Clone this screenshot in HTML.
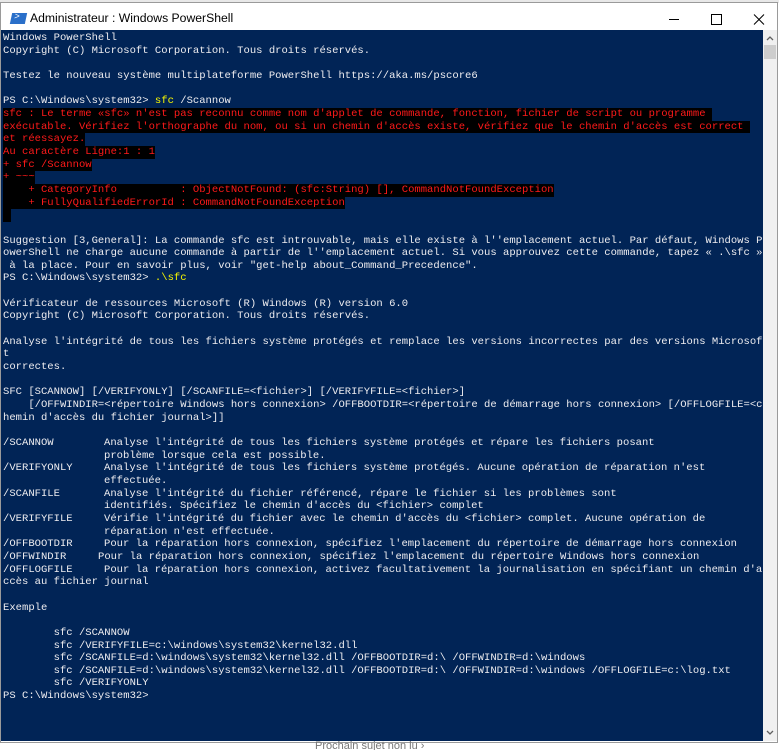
<!DOCTYPE html>
<html><head><meta charset="utf-8">
<style>
*{margin:0;padding:0;box-sizing:border-box}
html,body{width:779px;height:750px;overflow:hidden;background:#fff;position:relative}
#top{position:absolute;left:0;top:0;width:779px;height:3px;background:#e8e8e8}
#win{position:absolute;left:0;top:2px;width:778px;height:741px;border:1px solid #9a9a9a;background:#fff}
#title{position:absolute;left:29px;top:8px;font:12.2px "Liberation Sans",sans-serif;color:#000}
#icon{position:absolute;left:10px;top:10px;width:15px;height:11px;background:#2a6fc9;transform:skewX(-12deg)}
#con{position:absolute;left:1px;top:30px;width:762px;height:711px;background:#012456;overflow:hidden}
#sb{position:absolute;left:763px;top:30px;width:14px;height:711px;background:#f0f0f0}
#thumb{position:absolute;left:1px;top:15px;width:12px;height:14px;background:#cdcdcd}
pre{position:absolute;left:2px;top:2px;font:10.55px/12.65px "Liberation Mono","DejaVu Sans Mono",monospace;color:#eeedf0;white-space:pre}
.y{color:#f6f600}
.e{color:#ff1a1a;background:#000;display:inline-block;height:12.65px;vertical-align:top}
.d{display:inline-block;width:101px}
.d2{display:inline-block;width:95px}
#foot{position:absolute;left:315px;top:740px;font:11px "Liberation Sans",sans-serif;color:#777}
</style></head><body>
<div id="top"></div>
<div id="win">
<div id="icon"><span style="position:absolute;left:3px;top:-2px;color:#fff;font:9px 'Liberation Sans';">&gt;</span></div>
<div id="title">Administrateur : Windows PowerShell</div>
<svg style="position:absolute;left:668px;top:6px" width="100" height="20">
<line x1="0" y1="10.5" x2="10" y2="10.5" stroke="#000" stroke-width="1"/>
<rect x="42.5" y="5.5" width="10" height="10" fill="none" stroke="#000"/>
<path d="M85 5.5 L95 15.5 M95 5.5 L85 15.5" stroke="#000" stroke-width="1"/>
</svg>
</div>
<div id="con"><pre>Windows PowerShell
Copyright (C) Microsoft Corporation. Tous droits réservés.

Testez le nouveau système multiplateforme PowerShell https://aka.ms/pscore6

PS C:\Windows\system32&gt; <span class="y">sfc</span> /Scannow
<span class="e">sfc : Le terme «sfc» n'est pas reconnu comme nom d'applet de commande, fonction, fichier de script ou programme </span>
<span class="e">exécutable. Vérifiez l'orthographe du nom, ou si un chemin d'accès existe, vérifiez que le chemin d'accès est correct </span>
<span class="e">et réessayez.</span>
<span class="e">Au caractère Ligne:1 : 1</span>
<span class="e">+ sfc /Scannow</span>
<span class="e">+ ~~~</span>
<span class="e">    + CategoryInfo          : ObjectNotFound: (sfc:String) [], CommandNotFoundException</span>
<span class="e">    + FullyQualifiedErrorId : CommandNotFoundException</span>
<span class="e" style="width:8px"> </span>

Suggestion [3,General]: La commande sfc est introuvable, mais elle existe à l''emplacement actuel. Par défaut, Windows P
owerShell ne charge aucune commande à partir de l''emplacement actuel. Si vous approuvez cette commande, tapez « .\sfc »
 à la place. Pour en savoir plus, voir "get-help about_Command_Precedence".
PS C:\Windows\system32&gt; <span class="y">.\sfc</span>

Vérificateur de ressources Microsoft (R) Windows (R) version 6.0
Copyright (C) Microsoft Corporation. Tous droits réservés.

Analyse l'intégrité de tous les fichiers système protégés et remplace les versions incorrectes par des versions Microsof
t
correctes.

SFC [SCANNOW] [/VERIFYONLY] [/SCANFILE=&lt;fichier&gt;] [/VERIFYFILE=&lt;fichier&gt;]
    [/OFFWINDIR=&lt;répertoire Windows hors connexion&gt; /OFFBOOTDIR=&lt;répertoire de démarrage hors connexion&gt; [/OFFLOGFILE=&lt;c
hemin d'accès du fichier journal&gt;]]

<span class="d">/SCANNOW</span>Analyse l'intégrité de tous les fichiers système protégés et répare les fichiers posant
<span class="d"></span>problème lorsque cela est possible.
<span class="d">/VERIFYONLY</span>Analyse l'intégrité de tous les fichiers système protégés. Aucune opération de réparation n'est
<span class="d"></span>effectuée.
<span class="d">/SCANFILE</span>Analyse l'intégrité du fichier référencé, répare le fichier si les problèmes sont
<span class="d"></span>identifiés. Spécifiez le chemin d'accès du &lt;fichier&gt; complet
<span class="d">/VERIFYFILE</span>Vérifie l'intégrité du fichier avec le chemin d'accès du &lt;fichier&gt; complet. Aucune opération de
<span class="d"></span>réparation n'est effectuée.
<span class="d">/OFFBOOTDIR</span>Pour la réparation hors connexion, spécifiez l'emplacement du répertoire de démarrage hors connexion
<span class="d2">/OFFWINDIR</span>Pour la réparation hors connexion, spécifiez l'emplacement du répertoire Windows hors connexion
<span class="d">/OFFLOGFILE</span>Pour la réparation hors connexion, activez facultativement la journalisation en spécifiant un chemin d'a
ccès au fichier journal

Exemple

        sfc /SCANNOW
        sfc /VERIFYFILE=c:\windows\system32\kernel32.dll
        sfc /SCANFILE=d:\windows\system32\kernel32.dll /OFFBOOTDIR=d:\ /OFFWINDIR=d:\windows
        sfc /SCANFILE=d:\windows\system32\kernel32.dll /OFFBOOTDIR=d:\ /OFFWINDIR=d:\windows /OFFLOGFILE=c:\log.txt
        sfc /VERIFYONLY
PS C:\Windows\system32&gt;</pre></div>
<div id="sb">
<svg style="position:absolute;left:3px;top:5px" width="8" height="6"><path d="M1 5 L4 2 L7 5" fill="none" stroke="#606060" stroke-width="1.3"/></svg>
<div id="thumb"></div>
<svg style="position:absolute;left:3px;top:700px" width="8" height="6"><path d="M1 1 L4 4 L7 1" fill="none" stroke="#606060" stroke-width="1.3"/></svg>
</div>
<div id="foot">Prochain sujet non lu  ›</div>
</body></html>
